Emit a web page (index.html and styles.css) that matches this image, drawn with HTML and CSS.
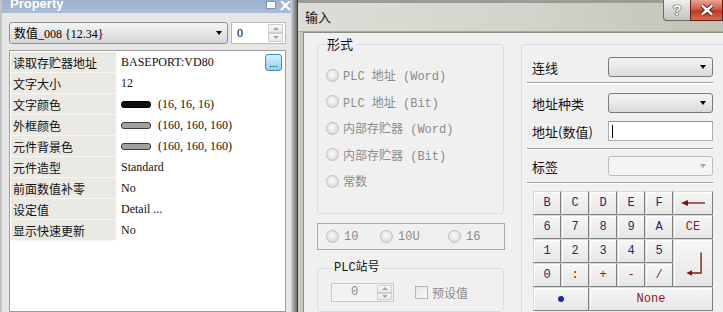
FILE: index.html
```html
<!DOCTYPE html>
<html lang="zh-CN">
<head>
  <meta charset="UTF-8">
  <title>Property / 输入</title>
  <link rel="stylesheet" href="styles.css">
</head>
<body>
<div class="desk">

  <div class="prop">
    <div class="prop-title">
      <span class="prop-name">Property</span>
      <span class="prop-icons">
        <svg width="10" height="8" viewBox="0 0 10 8"><rect x="0.5" y="0.5" width="9" height="7" fill="#fff" stroke="#7f93ad"/></svg>
        <svg width="11" height="10" viewBox="0 0 11 10"><path d="M1 0 L10 9 M10 0 L1 9" stroke="#fff" stroke-width="2.4"/></svg>
      </span>
    </div>
    <div class="prop-body">
      <div class="prop-head">
        <div class="obj-select">
          <span>数值_008 {12.34}</span>
          <span class="arrow"></span>
        </div>
        <div class="spin">
          <span class="spin-val">0</span>
          <span class="spin-btns"><i class="up"></i><i class="down"></i></span>
        </div>
      </div>
      <div class="grid">
        <div class="rows">
          <div class="key">读取存贮器地址</div>
          <div class="val">BASEPORT:VD80<span class="more">...</span></div>
          <div class="key">文字大小</div>
          <div class="val">12</div>
          <div class="key">文字颜色</div>
          <div class="val"><span class="swatch dark"></span>(16, 16, 16)</div>
          <div class="key">外框颜色</div>
          <div class="val"><span class="swatch"></span>(160, 160, 160)</div>
          <div class="key">元件背景色</div>
          <div class="val"><span class="swatch"></span>(160, 160, 160)</div>
          <div class="key">元件造型</div>
          <div class="val">Standard</div>
          <div class="key">前面数值补零</div>
          <div class="val">No</div>
          <div class="key">设定值</div>
          <div class="val">Detail ...</div>
          <div class="key">显示快速更新</div>
          <div class="val">No</div>
        </div>
      </div>
    </div>
  </div>

  <div class="splitter"></div>

  <div class="dialog">
    <div class="dlg-title">
      <span class="dlg-name">输入</span>
      <span class="caption-btns">
        <span class="cap-help">?</span>
        <span class="cap-close">
          <svg width="14" height="12" viewBox="0 0 14 12"><path d="M2 1.5 L12 10.5 M12 1.5 L2 10.5" stroke="#5a1a10" stroke-width="4.4"/><path d="M2 1.5 L12 10.5 M12 1.5 L2 10.5" stroke="#fff" stroke-width="2.4"/></svg>
        </span>
      </span>
    </div>

    <div class="client">
      <div class="left-col">
        <fieldset class="group">
          <legend>形式</legend>
          <div class="radio-list">
            <label class="radio"><span class="dot"></span>PLC 地址 (Word)</label>
            <label class="radio"><span class="dot"></span>PLC 地址 (Bit)</label>
            <label class="radio"><span class="dot"></span>内部存贮器 (Word)</label>
            <label class="radio"><span class="dot"></span>内部存贮器 (Bit)</label>
            <label class="radio"><span class="dot"></span>常数</label>
          </div>
        </fieldset>

        <div class="base-box">
          <label class="radio b10"><span class="dot"></span>10</label>
          <label class="radio b10u"><span class="dot"></span>10U</label>
          <label class="radio"><span class="dot"></span>16</label>
        </div>

        <fieldset class="group station">
          <legend class="mono">PLC站号</legend>
          <div class="station-row">
            <div class="num-spin">
              <span class="num-val">0</span>
              <span class="num-btns"><i class="up"></i><i class="down"></i></span>
            </div>
            <label class="check"><span class="box"></span>预设值</label>
          </div>
        </fieldset>
      </div>

      <div class="right-group">
        <div class="field">
          <span class="field-label">连线</span>
          <div class="combo"><span class="arrow"></span></div>
        </div>
        <div class="sep first"></div>
        <div class="field">
          <span class="field-label">地址种类</span>
          <div class="combo"><span class="arrow"></span></div>
        </div>
        <div class="field addr">
          <span class="field-label">地址(数值)</span>
          <div class="text-input"><span class="caret"></span></div>
        </div>
        <div class="sep second"></div>
        <div class="field">
          <span class="field-label">标签</span>
          <div class="combo disabled"><span class="arrow"></span></div>
        </div>
        <div class="sep third"></div>

        <div class="keypad">
          <span class="key-btn">B</span>
          <span class="key-btn">C</span>
          <span class="key-btn">D</span>
          <span class="key-btn">E</span>
          <span class="key-btn">F</span>
          <span class="key-btn">
            <svg width="26" height="8" viewBox="0 0 26 8"><path d="M6 4 H25" stroke="#7e1414" stroke-width="1.3"/><path d="M1 4 L8 1 L8 7 Z" fill="#7e1414"/></svg>
          </span>
          <span class="key-btn">6</span>
          <span class="key-btn">7</span>
          <span class="key-btn">8</span>
          <span class="key-btn">9</span>
          <span class="key-btn">A</span>
          <span class="key-btn op">CE</span>
          <span class="key-btn">1</span>
          <span class="key-btn">2</span>
          <span class="key-btn">3</span>
          <span class="key-btn">4</span>
          <span class="key-btn">5</span>
          <span class="key-btn enter">
            <svg width="40" height="48" viewBox="0 0 40 48"><path d="M28.5 13 V34.5 H18" stroke="#7e1414" stroke-width="1.4" fill="none"/><path d="M13 34.5 L19 31.5 L19 37.5 Z" fill="#7e1414"/></svg>
          </span>
          <span class="key-btn">0</span>
          <span class="key-btn op">:</span>
          <span class="key-btn op">+</span>
          <span class="key-btn op">-</span>
          <span class="key-btn op">/</span>
          <span class="key-btn wide2"><i class="point"></i></span>
          <span class="key-btn op wide4">None</span>
        </div>
      </div>
    </div>
  </div>

</div>
</body>
</html>
```

FILE: styles.css
```css
* {
  box-sizing: border-box;
}

body {
  margin: 0;
  width: 723px;
  height: 312px;
  overflow: hidden;
  font-family: "Noto Sans CJK SC", sans-serif;
  font-size: 12px;
  background: #e4e4e4;
}

.desk {
  display: flex;
  height: 312px;
}

/* ---- Property panel ---- */

.prop {
  width: 291px;
  flex: none;
  display: flex;
  flex-direction: column;
  background: #e6e6e6;
  border-left: 2px solid #c4c4c4;
}

.prop-title {
  height: 13px;
  flex: none;
  display: flex;
  justify-content: space-between;
  align-items: flex-start;
  overflow: hidden;
  padding: 0 0 0 8px;
  background: linear-gradient(#9bb0cb, #aabdd5);
}

.prop-name {
  color: #fff;
  font: bold 13px/8px "Liberation Sans", sans-serif;
}

.prop-icons {
  display: flex;
  align-items: flex-start;
  gap: 4px;
  padding-top: 1px;
}

.prop-body {
  flex: 1;
  display: flex;
  flex-direction: column;
  padding: 9px 5px 0 7px;
}

.prop-head {
  display: flex;
  gap: 3px;
  height: 22px;
}

.obj-select {
  width: 219px;
  display: flex;
  align-items: center;
  justify-content: space-between;
  padding: 0 5px 0 4px;
  border: 1px solid #8e8f8f;
  border-radius: 3px;
  background: linear-gradient(#f4f4f4, #e6e6e6 50%, #d6d6d6);
  font-family: "Liberation Serif", "Noto Sans CJK SC", serif;
  font-size: 12px;
}

.arrow {
  width: 0;
  height: 0;
  border-left: 3.5px solid transparent;
  border-right: 3.5px solid transparent;
  border-top: 4px solid #000;
}

.spin {
  flex: 1;
  display: flex;
  justify-content: space-between;
  align-items: stretch;
  background: #fff;
  border: 1px solid #b9b9b9;
}

.spin-val {
  padding: 3px 0 0 5px;
  font-family: "Liberation Serif", serif;
  font-size: 12px;
}

.spin-btns,
.num-btns {
  width: 15px;
  display: flex;
  flex-direction: column;
  margin: 1px 2px 1px 0;
}

.spin-btns i,
.num-btns i {
  flex: 1;
  display: flex;
  align-items: center;
  justify-content: center;
  background: linear-gradient(#f7f7f7, #e8e8e8);
  border: 1px solid #cfcfcf;
}

.spin-btns i::after,
.num-btns i::after {
  content: "";
  border-left: 3px solid transparent;
  border-right: 3px solid transparent;
}

.spin-btns .up::after,
.num-btns .up::after {
  border-bottom: 3px solid #a6a6a6;
}

.spin-btns .down::after,
.num-btns .down::after {
  border-top: 3px solid #a6a6a6;
}

.grid {
  flex: 1;
  margin-top: 6px;
  border: 1px solid #9d9d9d;
  background: #fff;
  padding: 1px 1px 0 1px;
}

.rows {
  display: grid;
  grid-template-columns: 106px 1fr;
  grid-auto-rows: 21px;
}

.key {
  background: #ebe9e4;
  border-bottom: 1px solid #f7f6f3;
  border-right: 1px solid #fff;
  padding: 1px 0 0 2px;
  line-height: 19px;
  color: #111;
}

.val {
  display: flex;
  align-items: center;
  padding-left: 4px;
  font-family: "Liberation Serif", serif;
  font-size: 12px;
  color: #111;
}

.more {
  margin-left: auto;
  margin-right: 2px;
  width: 17px;
  height: 17px;
  border: 1px solid #3d8fcb;
  border-radius: 3px;
  background: linear-gradient(#d6f1ff, #8fd0f4);
  font-family: "Liberation Sans", sans-serif;
  font-size: 10px;
  line-height: 17px;
  text-align: center;
  color: #123;
}

.swatch {
  width: 30px;
  height: 7px;
  margin-right: 7px;
  border-radius: 3px;
  border: 1px solid #3a3a3a;
  background: #a0a0a0;
}

.swatch.dark {
  background: #101010;
  border-color: #000;
}

.splitter {
  width: 6px;
  flex: none;
  background: linear-gradient(to right, #d4d4d4, #a5a5a5 40%, #6b6b6b);
}

/* ---- Input dialog ---- */

.dialog {
  flex: 1;
  min-width: 0;
  display: flex;
  flex-direction: column;
  background: #c9c8bd;
  border-left: 1px solid #3f3f3f;
}

.dlg-title {
  height: 32px;
  flex: none;
  display: flex;
  justify-content: space-between;
  align-items: flex-start;
  background:
    linear-gradient(#9b9b98, #9b9b98) top / 100% 3px no-repeat,
    linear-gradient(to right, #dddcd6, #d4d3cb 55%, #c2c1b3);
  border-bottom: 1px solid #a9a89c;
}

.dlg-name {
  padding: 8px 0 0 7px;
  font-size: 13px;
  line-height: 18px;
  color: #111;
}

.caption-btns {
  display: flex;
}

.cap-help {
  width: 27px;
  height: 21px;
  border: 1px solid #6a6a6a;
  border-top: none;
  border-right: none;
  border-radius: 0 0 0 4px;
  background: linear-gradient(#f0f0ee, #d6d6d2 50%, #c4c4c0);
  text-align: center;
  font: bold 15px/20px "Liberation Sans", sans-serif;
  color: #fff;
  text-shadow: 0 0 1px #333, 0 0 1px #333, 0 0 1px #333;
}

.cap-close {
  width: 33px;
  height: 21px;
  display: flex;
  align-items: center;
  justify-content: center;
  border: 1px solid #5b2015;
  border-top: none;
  background: linear-gradient(#e8a493, #d45e46 45%, #c0391f 55%, #d56d51);
}

.client {
  flex: 1;
  margin-left: 5px;
  display: flex;
  gap: 16px;
  padding: 3px 0 0 13px;
  background: #f0f0f0;
  border-left: 1px solid #8e8e84;
  border-top: 1px solid #8e8e84;
  overflow: hidden;
}

.left-col {
  width: 188px;
  flex: none;
  display: flex;
  flex-direction: column;
}

.group {
  margin: 0;
  padding: 0 0 0 8px;
  min-width: 0;
  border: 1px solid #d5dfe5;
  border-radius: 3px;
  width: 187px;
}

.group legend {
  padding: 0 2px;
  margin-left: -1px;
  font-size: 13px;
  line-height: 16px;
  color: #111;
}

.group legend.mono {
  font-family: "Liberation Mono", "Noto Sans CJK SC", monospace;
  font-size: 12px;
  margin-left: 6px;
}

.radio-list {
  height: 161px;
  padding-top: 10px;
}

.radio {
  display: flex;
  align-items: center;
  gap: 4px;
  height: 26.5px;
  font-family: "Liberation Mono", "Noto Sans CJK SC", monospace;
  font-size: 12px;
  color: #8b8b8b;
}

.dot {
  width: 13px;
  height: 13px;
  flex: none;
  border-radius: 50%;
  border: 1px solid #bdbdbd;
  background: radial-gradient(circle at 45% 40%, #fafafa, #dedede 70%);
}

.base-box {
  margin-top: 9px;
  height: 31px;
  display: flex;
  align-items: center;
  padding-left: 8px;
  border: 1px solid #a9a9a9;
}

.base-box .radio {
  height: auto;
  gap: 5px;
}

.base-box .b10 {
  width: 54px;
}

.base-box .b10u {
  width: 68px;
}

.station {
  margin-top: 10px;
  height: 60px;
}

.station-row {
  display: flex;
  align-items: center;
  margin-top: 7px;
  padding-left: 5px;
}

.num-spin {
  width: 63px;
  height: 19px;
  display: flex;
  justify-content: space-between;
  border: 1px solid #c8c8c8;
  background: #f2f2f2;
}

.num-val {
  flex: 1;
  text-align: center;
  font-family: "Liberation Mono", monospace;
  font-size: 12px;
  line-height: 17px;
  color: #8b8b8b;
}

.num-btns {
  margin: 1px 1px 1px 0;
}

.check {
  display: flex;
  align-items: center;
  gap: 4px;
  margin-left: 21px;
  color: #8b8b8b;
  font-size: 12px;
}

.box {
  width: 13px;
  height: 13px;
  border: 1px solid #b5b5b5;
  background: linear-gradient(135deg, #e4e4e4, #fafafa);
}

.right-group {
  margin-top: 8px;
  width: 215px;
  height: 300px;
  flex: none;
  padding: 12px 0 0 10px;
  border: 1px solid #d5dfe5;
  border-radius: 3px;
}

.field {
  display: flex;
  align-items: center;
  height: 20px;
}

.field.addr {
  margin-top: 8px;
}

.field-label {
  width: 76px;
  font-size: 13px;
  color: #111;
}

.combo {
  width: 105px;
  height: 20px;
  display: flex;
  align-items: center;
  justify-content: flex-end;
  padding-right: 6px;
  border: 1px solid #7a7a7a;
  border-radius: 3px;
  background: linear-gradient(#f3f3f3, #e9e9e9 50%, #d9d9d9);
}

.combo.disabled {
  border-color: #bcbcbc;
  background: #f4f4f4;
}

.combo.disabled .arrow {
  border-top-color: #a8a8a8;
}

.text-input {
  width: 105px;
  height: 20px;
  display: flex;
  align-items: center;
  padding-left: 3px;
  background: #fff;
  border: 1px solid #abadb3;
  border-top-color: #8e9197;
}

.caret {
  width: 1px;
  height: 13px;
  background: #000;
}

.sep {
  width: 186px;
  margin-left: -5px;
  border-top: 1px solid #a0a0a0;
  border-bottom: 1px solid #fff;
}

.sep.first {
  margin-top: 5px;
  margin-bottom: 9px;
}

.sep.second {
  margin-top: 7px;
  margin-bottom: 6px;
}

.sep.third {
  margin-top: 6px;
  margin-bottom: 7px;
}

.keypad {
  margin-left: 1px;
  display: grid;
  grid-template-columns: repeat(5, 28px) 40px;
  grid-auto-rows: 24px;
}

.key-btn {
  display: flex;
  align-items: center;
  justify-content: center;
  border-top: 1px solid #dadada;
  border-left: 1px solid #dadada;
  border-right: 1px solid #7f7f7f;
  border-bottom: 1px solid #7f7f7f;
  box-shadow: inset 1px 1px #fff;
  background: linear-gradient(#f7f7f7, #e6e6e6);
  font-family: "Liberation Mono", monospace;
  font-size: 12px;
  color: #1f2875;
}

.key-btn.op {
  color: #8a1c1c;
}

.key-btn.enter {
  grid-column: 6;
  grid-row: 3 / span 2;
}

.key-btn.wide2 {
  grid-column: span 2;
}

.key-btn.wide4 {
  grid-column: span 4;
}

.point {
  width: 6px;
  height: 6px;
  border-radius: 50%;
  background: #1d2a9a;
}
```
